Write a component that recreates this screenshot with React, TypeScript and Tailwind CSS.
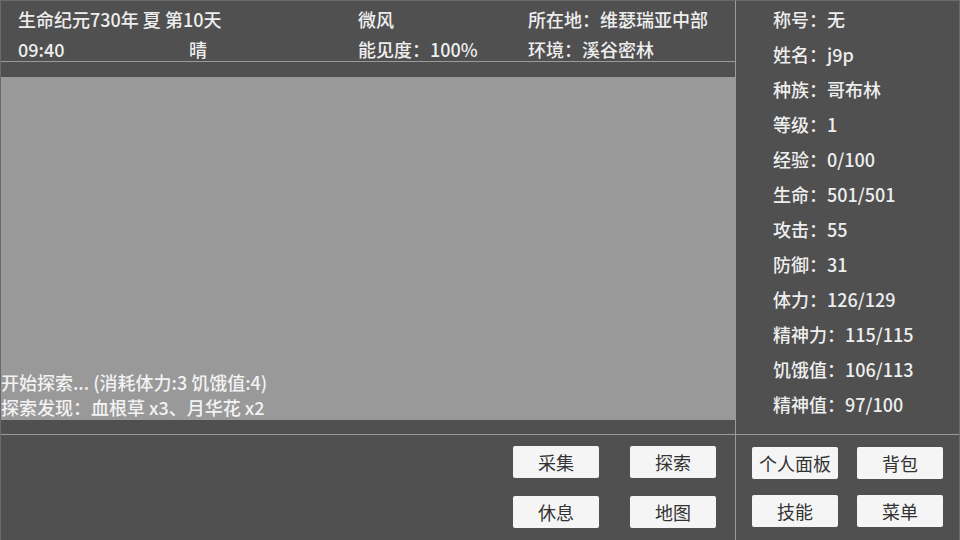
import React from "react";

const stats = [
  "称号：无",
  "姓名：j9p",
  "种族：哥布林",
  "等级：1",
  "经验：0/100",
  "生命：501/501",
  "攻击：55",
  "防御：31",
  "体力：126/129",
  "精神力：115/115",
  "饥饿值：106/113",
  "精神值：97/100",
];

function Btn({ label }: { label: string }) {
  return (
    <button className="w-[86px] h-[32px] rounded-[2px] bg-[#f5f5f5] text-[#333333] text-[18px] font-normal leading-[32px] flex items-center justify-center">
      {label}
    </button>
  );
}

export default function App() {
  return (
    <div
      className="w-[960px] h-[540px] bg-[#505050] flex text-[18px] font-medium text-[#eeeeee] overflow-hidden"
      style={{ fontFamily: '"Noto Sans CJK SC", "Noto Sans", sans-serif' }}
    >
      {/* Left column */}
      <div className="w-[736px] h-full flex flex-col border-r border-[#9a9a9a] border-t border-l border-t-[#6a6a6a] border-l-[#6a6a6a]">
        <div className="h-[61px] border-b border-[#9a9a9a] pt-[3px] pl-[17px] grid grid-cols-[171px_169px_170px_1fr] grid-rows-[30px_30px] leading-[30px]">
          <div className="col-span-2 whitespace-nowrap">生命纪元730年 夏 第10天</div>
          <div>微风</div>
          <div className="whitespace-nowrap">所在地：维瑟瑞亚中部</div>
          <div>09:40</div>
          <div>晴</div>
          <div className="whitespace-nowrap">能见度：100%</div>
          <div className="whitespace-nowrap">环境：溪谷密林</div>
        </div>
        <div className="mt-[15px] h-[343px] bg-[#999999] flex flex-col justify-end leading-[25px] text-[#f2f2f2]">
          <div className="whitespace-nowrap">开始探索... (消耗体力:3 饥饿值:4)</div>
          <div className="whitespace-nowrap">探索发现：血根草 x3、月华花 x2</div>
        </div>
        <div className="mt-[14px] flex-1 border-t border-[#9a9a9a] pt-[11px] pr-[19px] flex justify-end">
          <div className="grid grid-cols-[86px_86px] gap-x-[31px] gap-y-[18px] h-fit">
            <Btn label="采集" />
            <Btn label="探索" />
            <Btn label="休息" />
            <Btn label="地图" />
          </div>
        </div>
      </div>
      {/* Right column */}
      <div className="flex-1 h-full flex flex-col border-t border-r border-[#6a6a6a]">
        <div className="h-[434px] border-b border-[#9a9a9a] pl-[37px] pt-[1px] flex flex-col">
          {stats.map((s) => (
            <div key={s} className="h-[35px] leading-[35px] whitespace-nowrap">
              {s}
            </div>
          ))}
        </div>
        <div className="flex-1 pt-[12px] pl-[16px]">
          <div className="grid grid-cols-[86px_86px] gap-x-[19px] gap-y-[16px]">
            <Btn label="个人面板" />
            <Btn label="背包" />
            <Btn label="技能" />
            <Btn label="菜单" />
          </div>
        </div>
      </div>
    </div>
  );
}
